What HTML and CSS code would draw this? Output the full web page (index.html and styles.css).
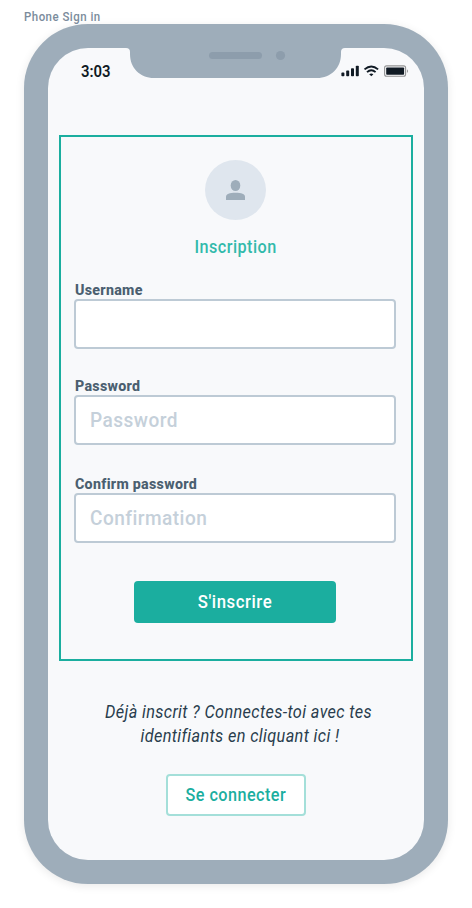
FILE: index.html
```html
<!DOCTYPE html>
<html lang="fr">
<head>
<meta charset="utf-8">
<title>Phone Sign in</title>
<link rel="stylesheet" href="styles.css">
</head>
<body>
<div class="artboard-name"><span>Phone Sign in</span></div>
<main class="phone">
  <div class="screen">
    <svg class="notch" width="219" height="30" viewBox="0 0 219 30" aria-hidden="true">
      <path fill="#9eadba" d="M0 0Q4 0 4 4V6C4 20 14 30 28 30H191C205 30 215 20 215 6V4Q215 0 219 0Z"/>
      <rect x="83" y="4" width="53" height="7" rx="3.5" fill="#8d9dac"/>
      <circle cx="154.5" cy="7.5" r="4.6" fill="#8d9dac"/>
    </svg>
    <header class="status">
      <span class="clock">3:03</span>
      <svg class="indicators" width="68" height="12" viewBox="0 0 68 12" aria-hidden="true">
        <g fill="#101a24">
          <rect x="0.4" y="7.6" width="3" height="3.6" rx=".8"/>
          <rect x="5.2" y="5.6" width="3" height="5.6" rx=".8"/>
          <rect x="10" y="3.2" width="3" height="8" rx=".8"/>
          <rect x="14.8" y="0.8" width="3" height="10.4" rx=".8"/>
          <path d="M28.2 9.2Q30.3 7.6 32.4 9.2L30.3 11.2Z"/>
        </g>
        <g fill="none" stroke="#101a24" stroke-width="1.9">
          <path d="M23.5 4.4Q30.3 -1.6 37.1 4.4"/>
          <path d="M26 7.1Q30.3 3.3 34.6 7.1"/>
        </g>
        <rect x="43.6" y="0.9" width="21" height="10.4" rx="2" fill="none" stroke="#929394" stroke-width="1.1"/>
        <rect x="45.2" y="2.5" width="17.9" height="7.2" rx=".8" fill="#101a24"/>
        <path d="M66 4.2Q68 6 66 7.9Z" fill="#929394"/>
      </svg>
    </header>
    <form class="signup">
      <div class="avatar">
        <svg width="21" height="20" viewBox="0 0 21 20" aria-hidden="true">
          <ellipse cx="10.5" cy="5.5" rx="4.8" ry="5.5" fill="#9eadba"/>
          <path d="M1 20V16.8C1 14 4.5 12.8 10.5 12.8S20 14 20 16.8V20Z" fill="#9eadba"/>
        </svg>
      </div>
      <h1 class="title"><span>Inscription</span></h1>
      <label class="label label-user" for="user"><span>Username</span></label>
      <div class="field" id="user"></div>
      <label class="label label-pass" for="pass"><span>Password</span></label>
      <div class="field" id="pass"><span>Password</span></div>
      <label class="label label-confirm" for="confirm"><span>Confirm password</span></label>
      <div class="field" id="confirm"><span>Confirmation</span></div>
      <button class="submit" type="button"><span>S'inscrire</span></button>
    </form>
    <p class="prompt"><span class="line-one">Déjà inscrit ? Connectes-toi avec tes</span><br><span class="line-two">identifiants en cliquant ici !</span></p>
    <button class="login" type="button"><span>Se connecter</span></button>
  </div>
</main>
</body>
</html>
```
FILE: styles.css
```css
* { box-sizing: border-box; }
body {
  margin: 0;
  width: 472px;
  height: 908px;
  overflow: hidden;
  background: #fff;
  font-family: Roboto, "Liberation Sans", sans-serif;
  font-variant-ligatures: no-common-ligatures;
}
/* Condensed look: narrow the glyphs, open the tracking */
.artboard-name span,
.clock,
.title span,
.label span,
.field span,
.submit span,
.login span,
.line-one,
.line-two {
  display: inline-block;
}
.artboard-name {
  height: 24px;
  padding: 9px 0 0 24px;
  font-size: 12px;
  line-height: 16px;
  color: #7b8c9c;
  font-weight: 500;
}
.artboard-name span {
  letter-spacing: .5px;
  transform: scaleX(.955);
  transform-origin: left;
}
.phone {
  width: 424px;
  height: 860px;
  margin-left: 24px;
  padding: 24px;
  border-radius: 64px;
  background: #9eadba;
  box-shadow: 0 2px 10px rgba(0, 0, 0, .09);
}
.screen {
  position: relative;
  display: flex;
  flex-direction: column;
  align-items: center;
  height: 812px;
  border-radius: 40px;
  background: #f8f9fb;
}
.notch { position: absolute; left: 78px; top: 0; }
.status {
  display: flex;
  justify-content: space-between;
  width: 100%;
  height: 87px;
  padding: 14px 15px 0 33px;
}
.clock {
  height: 20px;
  font-size: 16px;
  line-height: 20px;
  font-weight: 600;
  color: #101a24;
  transform: scaleX(.93);
  transform-origin: left;
}
.indicators { margin-top: 3px; }
.signup {
  display: flex;
  flex-direction: column;
  width: 354px;
  height: 526px;
  padding: 23px 15px 0 13px;
  border: 2px solid #1bae9f;
}
.avatar {
  align-self: center;
  display: grid;
  place-items: center;
  width: 61px;
  height: 60px;
  border-radius: 50%;
  background: #dfe6ee;
}
.title {
  margin: 15px 0 0;
  padding-left: 2px;
  text-align: center;
  font-size: 18px;
  line-height: 23px;
  height: 24px;
  font-weight: 500;
  color: #32baab;
}
.title span {
  letter-spacing: .5px;
  transform: scaleX(.9);
}
.label {
  height: 20px;
  padding-left: 1px;
  font-size: 15px;
  line-height: 22px;
  font-weight: 800;
  color: #4b5f70;
}
.label span {
  letter-spacing: .3px;
  transform: scaleX(.95);
  transform-origin: left;
}
.label-user { margin-top: 20px; }
.label-pass { margin-top: 26px; }
.label-confirm { margin-top: 28px; }
.field {
  flex: none;
  width: 322px;
  height: 50px;
  padding: 0 14px;
  border: 2px solid #bdcad5;
  border-radius: 4px;
  background: #fff;
  font-size: 20.5px;
  line-height: 47px;
  font-weight: 500;
  color: #c5d0da;
}
.field span {
  letter-spacing: .5px;
  transform: scaleX(.93);
  transform-origin: left;
}
button {
  padding: 0;
  font-family: inherit;
  font-size: 18px;
  line-height: 24px;
  font-weight: 500;
}
.submit {
  align-self: center;
  width: 202px;
  height: 42px;
  margin-top: 38px;
  border: 0;
  border-radius: 4px;
  background: #1bae9f;
  color: #fff;
}
.submit span {
  letter-spacing: .6px;
  transform: scaleX(.93);
}
.prompt {
  margin: 39px 0 0 5px;
  text-align: center;
  white-space: nowrap;
  font-size: 18px;
  line-height: 24px;
  font-style: italic;
  color: #293d4d;
}
.line-one,
.line-two {
  letter-spacing: .4px;
  transform: scaleX(.905);
}
.line-two { margin-left: 3px; }
.login {
  width: 140px;
  height: 42px;
  margin-top: 26px;
  border: 2px solid #a4dfd9;
  border-radius: 4px;
  background: #fff;
  color: #1bae9f;
}
.login span {
  letter-spacing: .5px;
  transform: scaleX(.9);
}
```
